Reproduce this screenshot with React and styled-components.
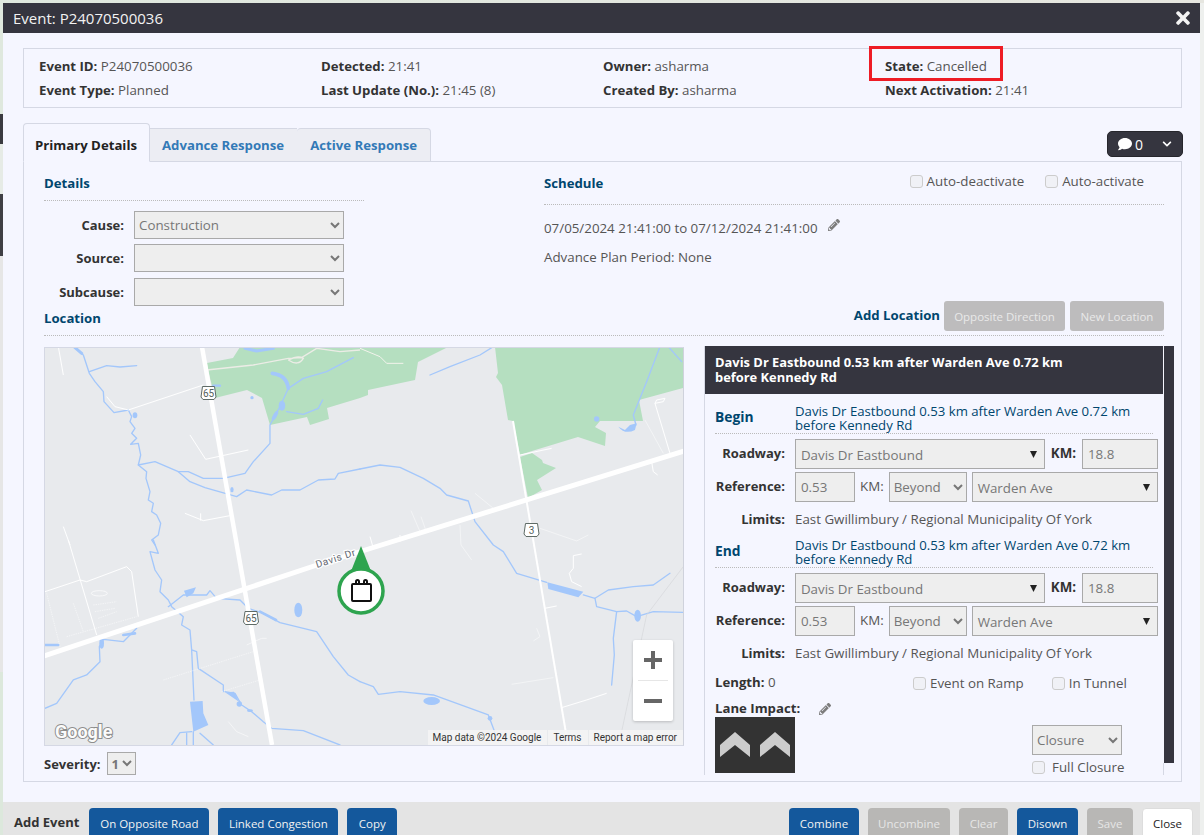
import React from 'react'
import styled, { createGlobalStyle } from 'styled-components'
import { FaComment, FaPencilAlt, FaTimes, FaChevronDown } from 'react-icons/fa'

const GlobalStyle = createGlobalStyle`
    html, body { margin: 0; padding: 0; }
    body {
        font-family: "Open Sans", "Liberation Sans", sans-serif;
        font-size: 13.33px;
        color: #555;
    }
    * { box-sizing: border-box; }
`

const Page = styled.div`
    width: 1204px;
    height: 835px;
    overflow: hidden;
    padding: 3px 4px 0 3px;
    background-color: #eef0ee;
    background-repeat: no-repeat;
    background-size: 100% 3px, 3px 100%;
    background-image:
        linear-gradient(90deg, #dfe8de, #e6e6e0),
        linear-gradient(180deg,
            #dfe8de 0, #dfe8de 114px, #3a3a40 114px, #3a3a40 144px,
            #e6ebe6 144px, #e6ebe6 194px, #3f3f44 194px, #3f3f44 256px,
            #e6e6e6 256px, #e6e6e6 672px, #dce8dc 672px);
`
const Modal = styled.div`
    height: 832px;
    display: flex;
    flex-direction: column;
    background: #f5f6ff;
`
const TitleBar = styled.div`
    flex: 0 0 30px;
    display: flex;
    align-items: center;
    justify-content: space-between;
    padding: 0 7px 0 10px;
    background: #35353f;
    color: #f2f2f2;
    font-size: 15px;
`
const Body = styled.div`
    flex: 1;
    padding: 15px 18px 0 20px;
`
const InfoBox = styled.div`
    position: relative;
    height: 60px;
    padding: 5px 0 0 15px;
    display: grid;
    grid-template-columns: repeat(4, 282px);
    grid-auto-rows: 24px;
    align-items: center;
    border: 1px solid #d5d8e4;
`
const Highlight = styled.div`
    position: absolute;
    left: 845px;
    top: -3px;
    width: 134px;
    height: 35px;
    border: 3px solid #ee1c25;
`
const Bold = styled.b`
    font-weight: 700;
    font-size: 13.2px;
    color: #333;
`
const TabsRow = styled.div`
    margin-top: 15px;
    height: 38px;
    display: flex;
    align-items: flex-end;
    justify-content: space-between;
`
const TabBar = styled.div`
    display: flex;
    align-items: flex-end;
    margin-bottom: -1px;
    position: relative;
`
const Tab = styled.div`
    height: ${props => (props.$active ? '39px' : '34px')};
    padding: ${props => (props.$active ? '5px 12px 0 11px' : `0 ${props.$next ? props.$pad + 1 : props.$pad}px 0 ${props.$pad}px`)};
    display: flex;
    align-items: center;
    font-weight: 700;
    font-size: 13.2px;
    color: ${props => (props.$active ? '#222' : '#337ab7')};
    background: ${props => (props.$active ? '#f5f6ff' : '#ecedf3')};
    border: 1px solid #d5d8e4;
    border-bottom: ${props => (props.$active ? '1px solid #f5f6ff' : '1px solid #d5d8e4')};
    border-left: ${props => (props.$active ? '1px solid #d5d8e4' : 'none')};
    border-right: ${props => (props.$next ? 'none' : '1px solid #d5d8e4')};
    border-radius: ${props => (props.$active || props.$last ? '4px 4px 0 0' : '0')};
`
const CommentButton = styled.div`
    width: 76px;
    height: 26px;
    margin: 0 -1px 4px 0;
    padding: 0 10px;
    display: flex;
    align-items: center;
    gap: 3px;
    background: #35353f;
    border: 1px solid #26262c;
    border-radius: 5px;
    color: #fff;
    font-size: 14px;
    svg:last-child { margin-left: auto; }
`
const TabPanel = styled.div`
    height: 621px;
    padding: 0 17px 0 20px;
    border: 1px solid #d5d8e4;
`
const TopGrid = styled.div`
    height: 139px;
    display: grid;
    grid-template-columns: 500px 620px;
`
const SectionTitle = styled.div`
    font-weight: 700;
    font-size: 13.2px;
    color: #00466e;
`
const DetailsHead = styled.div`
    width: 320px;
    height: 39px;
    padding-top: 12px;
    border-bottom: 1px dotted #bbb;
    margin-bottom: 10px;
`
const FormRow = styled.div`
    height: ${props => props.$h}px;
    display: flex;
    gap: 10px;
`
const FieldLabel = styled.div`
    width: ${props => props.$w}px;
    height: 28px;
    display: flex;
    align-items: center;
    justify-content: flex-end;
    font-weight: 700;
    font-size: 13px;
    color: #333;
`
const NativeSelect = styled.select`
    width: ${props => props.$w}px;
    height: ${props => props.$h || 30}px;
    padding: 0;
    border: 1px solid #a9a9a9;
    background-color: #eee;
    color: #777;
    opacity: 1;
    font: inherit;
`
const ScheduleHead = styled.div`
    height: 43px;
    padding-top: 12px;
    display: flex;
    justify-content: space-between;
    border-bottom: 1px dotted #bbb;
`
const CheckRow = styled.div`
    display: flex;
    gap: 21px;
    padding-right: 20px;
    margin-top: -1px;
    height: 16px;
`
const Check = styled.label`
    display: flex;
    align-items: center;
    gap: ${props => props.$gap || 4}px;
    line-height: 14px;
    color: #555;
    white-space: nowrap;
`
const CheckBox = styled.input.attrs({ type: 'checkbox', disabled: true })`
    appearance: none;
    width: 13px;
    height: 13px;
    margin: 0;
    background: #f0f1f6;
    border: 1px solid #ccc;
    border-radius: 3px;
`
const ScheduleLine = styled.div`
    margin-top: ${props => props.$top}px;
    display: flex;
    align-items: center;
    gap: 10px;
    height: 18px;
    svg { margin-top: -6px; }
`
const LocationHead = styled.div`
    height: 35px;
    display: flex;
    align-items: flex-start;
    justify-content: space-between;
    border-bottom: 1px dotted #bbb;
`
const LocationTitle = styled(SectionTitle)`
    margin-top: 8px;
`
const LocationActions = styled.div`
    display: flex;
    align-items: flex-start;
    gap: 5px;
`
const AddLocation = styled(SectionTitle)`
    margin: 5px -1px 0 0;
`
const MutedButton = styled.div`
    height: 30px;
    width: ${props => props.$w}px;
    display: flex;
    align-items: center;
    justify-content: center;
    background: #bdbcbd;
    color: #e9e9e9;
    border-radius: 3px;
    font-size: 11.5px;
`
const LocationGrid = styled.div`
    margin-top: 11px;
    display: grid;
    grid-template-columns: 640px 470px;
    gap: 20px;
`
const MapFrame = styled.div`
    position: relative;
    height: 399px;
    border: 1px solid #d5d8e4;
    border-right-color: #cfd2dc;
    overflow: hidden;
    background: #e8eaed;
    svg { display: block; }
`
const ZoomControl = styled.div`
    position: absolute;
    right: 10px;
    bottom: 24px;
    width: 40px;
    height: 81px;
    padding-top: 11px;
    background: #fff;
    border-radius: 2px;
    box-shadow: 0 1px 3px rgba(0, 0, 0, 0.2);
    display: flex;
    flex-direction: column;
    align-items: center;
`
const ZoomDivider = styled.div`
    width: 30px;
    height: 1px;
    background: #e6e6e6;
    margin: 11px 0 18px;
`
const Attribution = styled.div`
    position: absolute;
    right: 0;
    bottom: 0;
    height: 15px;
    display: flex;
    font-family: Roboto, "Liberation Sans", sans-serif;
    font-size: 10px;
    color: #333;
`
const AttributionItem = styled.span`
    padding: 0 6px 0 5px;
    line-height: 15px;
    background: rgba(245, 245, 245, 0.85);
    margin-left: 1px;
`
const SeverityRow = styled.div`
    margin-top: 6px;
    height: 23px;
    display: flex;
    align-items: center;
    gap: 6px;
    font-weight: 700;
    font-size: 13px;
    color: #333;
`
const Panel = styled.div`
    position: relative;
    width: 470px;
    height: 429px;
    margin-top: -1px;
    overflow: hidden;
    border-left: 1px solid #d5d8e4;
    padding-right: 10px;
`
const ScrollThumb = styled.div`
    position: absolute;
    top: 0;
    right: 0;
    width: 10px;
    height: 417px;
    background: #35353f;
`
const PanelEdge = styled.div`
    position: absolute;
    bottom: 0;
    right: 10px;
    width: 1px;
    height: 12px;
    background: #d5d8e4;
`
const PanelHeader = styled.div`
    height: 48px;
    margin-right: 1px;
    padding: 9px 90px 0 10px;
    background: #35353f;
    color: #fff;
    font-weight: 700;
    font-size: 12.9px;
    line-height: 15px;
`
const PanelBody = styled.div`
    padding: 0 6px 0 10px;
`
const EndpointHead = styled.div`
    width: 438px;
    display: flex;
    align-items: center;
    padding-top: ${props => props.$top}px;
    padding-bottom: 1px;
    border-bottom: 1px dotted #bbb;
    margin-bottom: 5px;
`
const EndpointTitle = styled(SectionTitle)`
    width: 80px;
    margin-top: -3px;
    font-size: 13.8px;
`
const EndpointText = styled.div`
    flex: 1;
    font-size: 13.2px;
    line-height: 14px;
    color: #00466e;
`
const ControlRow = styled.div`
    height: 30px;
    margin-bottom: 3px;
    display: flex;
    align-items: flex-start;
`
const RowLabel = styled.div`
    width: 70px;
    height: 28px;
    margin-right: 10px;
    display: flex;
    align-items: center;
    justify-content: flex-end;
    font-weight: 700;
    font-size: 13px;
    color: #333;
`
const ComboBox = styled.div`
    position: relative;
    width: ${props => props.$w}px;
    height: 30px;
    margin-left: ${props => props.$left || 0}px;
    padding: 1px 0 0 5px;
    display: flex;
    align-items: center;
    border: 1px solid #a9a9a9;
    background: #eee;
    color: #777;
`
const ComboArrow = styled.svg`
    position: absolute;
    right: 6px;
    top: 10px;
`
const TextField = styled.input.attrs({ disabled: true })`
    width: ${props => props.$w}px;
    height: 30px;
    padding: 0 5px;
    border: 1px solid #a9a9a9;
    background: #eee;
    color: #777;
    font: inherit;
`
const InlineLabel = styled.div`
    height: 28px;
    display: flex;
    align-items: center;
    margin: 0 ${props => props.$right}px 0 ${props => props.$left}px;
    font-weight: ${props => (props.$bold ? 700 : 400)};
    color: ${props => (props.$bold ? '#333' : '#555')};
`
const LimitsRow = styled.div`
    height: ${props => props.$h}px;
    display: flex;
    align-items: center;
    padding-bottom: ${props => props.$pad}px;
`
const LimitsLabel = styled(RowLabel)`
    height: auto;
`
const LengthRow = styled.div`
    height: 23px;
    display: flex;
    align-items: center;
`
const LengthText = styled.div`
    width: 198px;
`
const RampChecks = styled.div`
    display: flex;
    gap: 28px;
    padding-top: 3px;
`
const ImpactRow = styled.div`
    height: 24px;
    display: flex;
    align-items: flex-end;
    gap: 19px;
    font-weight: 700;
    font-size: 13.2px;
    color: #333;
    svg { margin-bottom: 2px; }
`
const LaneRow = styled.div`
    display: flex;
    gap: 237px;
`
const LaneBox = styled.svg`
    display: block;
    width: 80px;
    height: 56px;
    background: #333;
`
const ClosureColumn = styled.div`
    padding-top: 8px;
    display: flex;
    flex-direction: column;
    gap: 5px;
`
const Footer = styled.div`
    flex: 0 0 33px;
    overflow: hidden;
    display: flex;
    align-items: flex-start;
    padding: 6px 7px 0 11px;
    background: #e4e4e4;
`
const AddEvent = styled.div`
    margin: 5px 10px 0 0;
    font-weight: 700;
    font-size: 13px;
    color: #333;
`
const FooterGroup = styled.div`
    display: flex;
    gap: 9px;
    margin-left: ${props => (props.$right ? 'auto' : '0')};
`
const FooterButton = styled.div`
    width: ${props => props.$w}px;
    height: 34px;
    padding-bottom: 4px;
    display: flex;
    align-items: center;
    justify-content: center;
    border-radius: 4px;
    font-size: 11.5px;
    background: ${props => (props.$kind === 'muted' ? '#b8b7b5' : props.$kind === 'plain' ? '#fff' : '#14589c')};
    color: ${props => (props.$kind === 'muted' ? '#e6e6e6' : props.$kind === 'plain' ? '#222' : '#f2f2f2')};
    border: 1px solid ${props => (props.$kind === 'plain' ? '#ddd' : 'transparent')};
`

const Shield = ({ x, y, text }) => (
    <g transform={`translate(${x} ${y})`}>
        <path d="M-6-6.500H6L7.500 4 5.500 6.500H-5.500L-7.500 4Z" fill="#fff" stroke="#5f6b66" strokeWidth="1" />
        <text y="3.500" textAnchor="middle" fontSize="10" fontFamily="Roboto, sans-serif" fill="#55605b">{text}</text>
    </g>
)

const River = ({ d, w = 4 }) => <path d={d} fill="none" stroke="#a3c7fb" strokeWidth={w} strokeLinejoin="round" strokeLinecap="round" />
const Track = ({ d, w = 3, o = 1, dash }) => (
    <path d={d} fill="none" stroke="#fff" strokeWidth={w} opacity={o} strokeDasharray={dash} strokeLinejoin="round" />
)

const RoadMap = () => (
    <svg width="638" height="397" viewBox="1 1 638 397">
        <path fill="#b5dfc0" d="M196 0L189 11 163 16 166 31 171 51 203 43 218 51 226 78 263 70 266 78 285 72 283 61 316 51 324 48 324 43 371 33 374 15 404 0ZM451 0L454 26 452 30 458 38 464 73 469 74 476 108 488 104 534 90 561 99 562 86 551 80 556 74 599 74 595 53 639 41 639 0ZM476 110L488 106 498 113 499 116 512 121 493 133 498 143 484 151Z" />

        {/* north west part */}
        <g transform="translate(-4 -2) scale(.3333)">
            <River d="M105 8L130 30 148 85 165 110 190 140 192 170 222 203 265 195 275 215 270 230 285 250 275 265 290 280 272 298 295 295 302 330 295 360 320 380 318 400 330 440 325 465 340 475 335 500 350 510 362 535 355 570 335 585 345 600" />
            <River d="M148 80L200 62 240 66 290 62" />
            <River d="M295 360L345 350 415 380 445 380 490 400 550 400 615 385 640 350 690 295 690 240 720 185 745 130 790 100 860 80 940 38" />
            <River d="M415 380L450 410 495 428 590 455 620 435 695 450 725 435 780 435 835 405 885 402 895 385 960 372" />
            <River d="M740 200L790 208 835 190 848 165" />
            <River d="M105 8L125 25" w={9} />
            <River d="M697 85Q740 90 745 130" w={11} />
            <River d="M615 10L650 18 700 10" w={9} />
            <River d="M520 122L540 122" w={7} />
            <ellipse cx="285" cy="211" rx="7" ry="9" fill="#a3c7fb" />
            <ellipse cx="726" cy="182" rx="10" ry="15" fill="#a3c7fb" />
            <ellipse cx="705" cy="212" rx="6" ry="16" transform="rotate(30 705 212)" fill="#a3c7fb" />
            <circle cx="636" cy="158" r="5" fill="#a3c7fb" />
            <ellipse cx="576" cy="434" rx="5" ry="8" fill="#a3c7fb" />
            <Track d="M55 5L70 90" />
            <Track d="M200 155L225 185 265 195 490 120" />
            <Track d="M450 270L497 343 625 315" />
            <Track d="M435 505L490 527 570 512M482 505V527" />
            <Track d="M70 545L90 600" />
            <path d="M500 75L640 60 745 40 785 38 830 10 900 20 960 15M745 45Q775 65 790 40 775 30 745 45" fill="none" stroke="#ecece6" strokeWidth="4" />
        </g>

        {/* south west part */}
        <g transform="translate(-4 193) scale(.3333)">
            <River d="M340 0L355 40 330 35 345 90 365 120 360 155 385 180 395 200 430 230 425 255 450 270 455 330 470 335 475 385 550 435 550 455" />
            <River d="M455 330L462 480" />
            <River d="M385 200L430 165 500 165 510 152 530 175 600 180 625 205 670 220 720 248 830 275 880 350 925 405 960 425" />
            <River d="M15 505L50 490 100 420 140 405 180 365 178 320 190 298 250 305 290 265" />
            <River d="M555 455L585 460 605 495 635 515 670 545 695 565 790 572 900 615" />
            <River d="M455 575L420 578 395 615M440 580V615M460 575V615M480 580L520 615" />
            <River d="M660 215L708 240" w={8} />
            <River d="M250 285L285 280" w={8} />
            <River d="M15 315L55 315" w={8} />
            <path fill="#a3c7fb" d="M450 485L488 483 490 520 505 555 460 575ZM432 152L468 142 460 160 440 172ZM555 457L582 455 597 485Z" />
            <ellipse cx="775" cy="210" rx="12" ry="22" fill="#a3c7fb" />
            <ellipse cx="185" cy="310" rx="7" ry="16" fill="#a3c7fb" />
            <circle cx="598" cy="492" r="8" fill="#a3c7fb" />
            <ellipse cx="630" cy="512" rx="9" ry="4" fill="#a3c7fb" />
            <Track d="M85 0L170 285" />
            <Track d="M15 155L120 120 140 125 260 80 275 95 295 230" />
            <Track d="M370 420L640 335M545 455L660 420M20 160L60 320M100 190L130 275M160 195L230 185M165 215L225 205M175 235L230 215M80 290L290 230" w={2} o={0.75} dash="4 3" />
            <ellipse cx="178" cy="160" rx="24" ry="8" fill="none" stroke="#fff" strokeWidth="2" />
            <Track d="M565 545L590 575 625 590M620 315L665 295 680 295" w={2} o={0.8} />
        </g>

        {/* east part */}
        <g transform="translate(316 -2) scale(.3333)">
            <River d="M210 90L270 65 360 30 400 5" />
            <River d="M965 50L925 5 900 5 860 110 820 210 828 240" />
            <River d="M0 372L60 360 120 367 190 400 240 430 260 450 325 468 345 530 400 600 430 620 470 685 560 712" />
            <River d="M670 750L705 760 745 735 820 725 880 720 930 685" />
            <River d="M705 760L710 785 770 800 800 798 830 815 880 800 970 802" />
            <River d="M770 800L760 880 763 930 755 1020" />
            <River d="M0 1010L40 1025 55 1048 120 1040 220 1050 385 1110 400 1150 415 1190" />
            <path fill="#a3c7fb" d="M775 245Q795 270 825 255L830 235 810 240 795 255ZM562 712L670 740 655 757 565 732Z" />
            <circle cx="710" cy="222" r="8" fill="#a3c7fb" />
            <ellipse cx="833" cy="812" rx="10" ry="18" fill="#a3c7fb" />
            <ellipse cx="215" cy="1068" rx="25" ry="12" fill="#a3c7fb" />
            <circle cx="390" cy="1120" r="7" fill="#a3c7fb" />
            <path d="M785 1160L860 810 970 665" fill="none" stroke="#d5d7da" strokeWidth="2" />
            <Track d="M153 497L180 560M183 515L197 555M300 540L303 600 335 645M345 445L400 490M540 550L650 588 685 570M530 850L540 875 520 888M455 1018L580 998" w={2} o={0.7} />
            <Track d="M665 627L640 632 640 670 628 685 635 710 665 725M555 790L590 783M605 1088L680 1065 740 1045M480 330L575 310M885 175L930 325M885 175L890 165 915 160 910 170 885 175M875 350L880 380 893 390M30 575L40 610M120 570V590" />
            <Track d="M855 225L910 325" w={2} o={0.7} />
            <path d="M0 10L60 35 80 55 130 55" fill="none" stroke="#f3f3ec" strokeWidth="3" />
        </g>

        <path d="M469 74L524 398" fill="none" stroke="#fff" strokeWidth="2" />
        <path d="M158 0L228 398" fill="none" stroke="#fff" strokeWidth="4.500" />
        <path d="M0 309L273 218 640 104" fill="none" stroke="#fff" strokeWidth="5" />
        <Shield x="164.500" y="46" text="65" />
        <Shield x="207" y="271" text="65" />
        <Shield x="487.500" y="183" text="3" />
        <text x="273" y="221" transform="rotate(-18 273 221)" fontSize="10" letterSpacing=".6" fontFamily="Roboto, sans-serif" fill="#5f6670" stroke="#fff" strokeWidth="2.500" paintOrder="stroke">Davis Dr</text>

        {/* event marker */}
        <path d="M317 199L305.500 228H328.500Z" fill="#2ea44f" />
        <circle cx="317" cy="244" r="22" fill="#fff" stroke="#2ea44f" strokeWidth="3.500" />
        <g fill="none" stroke="#111" strokeWidth="2">
            <rect x="308" y="237" width="19" height="17" rx="1" />
            <path d="M312 237V234.500A1.500 1.500 0 0 1 315 234.500V237M320 237V234.500A1.500 1.500 0 0 1 323 234.500V237" />
        </g>

        <text x="11" y="391" fontSize="18" fontWeight="700" fontFamily="Roboto, sans-serif" fill="#fbfbfb" stroke="#8d8d8d" strokeWidth="2" paintOrder="stroke">Google</text>
    </svg>
)

const Arrow = () => (
    <ComboArrow width="9" height="9" viewBox="0 0 9 9">
        <path d="M1 1H8L4.500 8Z" fill="#222" />
    </ComboArrow>
)

const Pencil = () => <FaPencilAlt size={12} color="#7d7d7d" />

const Endpoint = ({ title, top, limitsHeight, limitsPad }) => (
    <>
        <EndpointHead $top={top}>
            <EndpointTitle>{title}</EndpointTitle>
            <EndpointText>Davis Dr Eastbound 0.53 km after Warden Ave 0.72 km before Kennedy Rd</EndpointText>
        </EndpointHead>
        <ControlRow>
            <RowLabel>Roadway:</RowLabel>
            <ComboBox $w={250}>Davis Dr Eastbound<Arrow /></ComboBox>
            <InlineLabel $bold $left={6} $right={6}>KM:</InlineLabel>
            <TextField $w={76} defaultValue="18.8" />
        </ControlRow>
        <ControlRow>
            <RowLabel>Reference:</RowLabel>
            <TextField $w={60} defaultValue="0.53" />
            <InlineLabel $left={5} $right={5}>KM:</InlineLabel>
            <NativeSelect disabled $w={78}><option>Beyond</option></NativeSelect>
            <ComboBox $w={186} $left={5}>Warden Ave<Arrow /></ComboBox>
        </ControlRow>
        <LimitsRow $h={limitsHeight} $pad={limitsPad}>
            <LimitsLabel>Limits:</LimitsLabel>
            East Gwillimbury / Regional Municipality Of York
        </LimitsRow>
    </>
)

const App = () => (
    <Page>
        <GlobalStyle />
        <Modal>
            <TitleBar>
                Event: P24070500036
                <FaTimes size={20} color="#f4f4f4" />
            </TitleBar>
            <Body>
                <InfoBox>
                    <Highlight />
                    <div><Bold>Event ID:</Bold> P24070500036</div>
                    <div><Bold>Detected:</Bold> 21:41</div>
                    <div><Bold>Owner:</Bold> asharma</div>
                    <div><Bold>State:</Bold> Cancelled</div>
                    <div><Bold>Event Type:</Bold> Planned</div>
                    <div><Bold>Last Update (No.):</Bold> 21:45 (8)</div>
                    <div><Bold>Created By:</Bold> asharma</div>
                    <div><Bold>Next Activation:</Bold> 21:41</div>
                </InfoBox>
                <TabsRow>
                    <TabBar>
                        <Tab $active>Primary Details</Tab>
                        <Tab $next $pad={12}>Advance Response</Tab>
                        <Tab $last $pad={13}>Active Response</Tab>
                    </TabBar>
                    <CommentButton>
                        <FaComment size={14} />0
                        <FaChevronDown size={10} />
                    </CommentButton>
                </TabsRow>
                <TabPanel>
                    <TopGrid>
                        <div>
                            <DetailsHead><SectionTitle>Details</SectionTitle></DetailsHead>
                            <FormRow $h={33}>
                                <FieldLabel $w={80}>Cause:</FieldLabel>
                                <NativeSelect disabled $w={210} $h={28}><option>Construction</option></NativeSelect>
                            </FormRow>
                            <FormRow $h={34}>
                                <FieldLabel $w={80}>Source:</FieldLabel>
                                <NativeSelect disabled $w={210} $h={28}><option></option></NativeSelect>
                            </FormRow>
                            <FormRow $h={28}>
                                <FieldLabel $w={80}>Subcause:</FieldLabel>
                                <NativeSelect disabled $w={210} $h={28}><option></option></NativeSelect>
                            </FormRow>
                        </div>
                        <div>
                            <ScheduleHead>
                                <SectionTitle>Schedule</SectionTitle>
                                <CheckRow>
                                    <Check><CheckBox />Auto-deactivate</Check>
                                    <Check><CheckBox />Auto-activate</Check>
                                </CheckRow>
                            </ScheduleHead>
                            <ScheduleLine $top={14}>07/05/2024 21:41:00 to 07/12/2024 21:41:00 <Pencil /></ScheduleLine>
                            <ScheduleLine $top={11}>Advance Plan Period: None</ScheduleLine>
                        </div>
                    </TopGrid>
                    <LocationHead>
                        <LocationTitle>Location</LocationTitle>
                        <LocationActions>
                            <AddLocation>Add Location</AddLocation>
                            <MutedButton $w={121}>Opposite Direction</MutedButton>
                            <MutedButton $w={94}>New Location</MutedButton>
                        </LocationActions>
                    </LocationHead>
                    <LocationGrid>
                        <div>
                            <MapFrame>
                                <RoadMap />
                                <ZoomControl>
                                    <svg width="18" height="18" viewBox="0 0 18 18"><path d="M7 0H11V7H18V11H11V18H7V11H0V7H7Z" fill="#666" /></svg>
                                    <ZoomDivider />
                                    <svg width="18" height="4" viewBox="0 0 18 4"><path d="M0 0H18V4H0Z" fill="#666" /></svg>
                                </ZoomControl>
                                <Attribution>
                                    <AttributionItem>Map data ©2024 Google</AttributionItem>
                                    <AttributionItem>Terms</AttributionItem>
                                    <AttributionItem>Report a map error</AttributionItem>
                                </Attribution>
                            </MapFrame>
                            <SeverityRow>
                                Severity:
                                <NativeSelect disabled $w={29} $h={23}><option>1</option></NativeSelect>
                            </SeverityRow>
                        </div>
                        <Panel>
                            <PanelHeader>Davis Dr Eastbound 0.53 km after Warden Ave 0.72 km before Kennedy Rd</PanelHeader>
                            <PanelBody>
                                <Endpoint title="Begin" top={10} limitsHeight={33} limitsPad={5} />
                                <Endpoint title="End" top={0} limitsHeight={31} limitsPad={3} />
                                <LengthRow>
                                    <LengthText><Bold>Length:</Bold> 0</LengthText>
                                    <RampChecks>
                                        <Check $gap={4}><CheckBox />Event on Ramp</Check>
                                        <Check $gap={4}><CheckBox />In Tunnel</Check>
                                    </RampChecks>
                                </LengthRow>
                                <ImpactRow>Lane Impact: <Pencil /></ImpactRow>
                                <LaneRow>
                                    <LaneBox viewBox="0 0 80 56">
                                        <path d="M5 28L20 15 35 28V40L20 28 5 40ZM45 28L60 15 75 28V40L60 28 45 40Z" fill="#ccc" />
                                    </LaneBox>
                                    <ClosureColumn>
                                        <NativeSelect disabled $w={90}><option>Closure</option></NativeSelect>
                                        <Check $gap={7}><CheckBox />Full Closure</Check>
                                    </ClosureColumn>
                                </LaneRow>
                            </PanelBody>
                            <ScrollThumb />
                            <PanelEdge />
                        </Panel>
                    </LocationGrid>
                </TabPanel>
            </Body>
            <Footer>
                <AddEvent>Add Event</AddEvent>
                <FooterGroup>
                    <FooterButton $w={120}>On Opposite Road</FooterButton>
                    <FooterButton $w={120}>Linked Congestion</FooterButton>
                    <FooterButton $w={50}>Copy</FooterButton>
                </FooterGroup>
                <FooterGroup $right>
                    <FooterButton $w={70}>Combine</FooterButton>
                    <FooterButton $w={82} $kind="muted">Uncombine</FooterButton>
                    <FooterButton $w={49} $kind="muted">Clear</FooterButton>
                    <FooterButton $w={61}>Disown</FooterButton>
                    <FooterButton $w={46} $kind="muted">Save</FooterButton>
                    <FooterButton $w={51} $kind="plain">Close</FooterButton>
                </FooterGroup>
            </Footer>
        </Modal>
    </Page>
)

export default App
